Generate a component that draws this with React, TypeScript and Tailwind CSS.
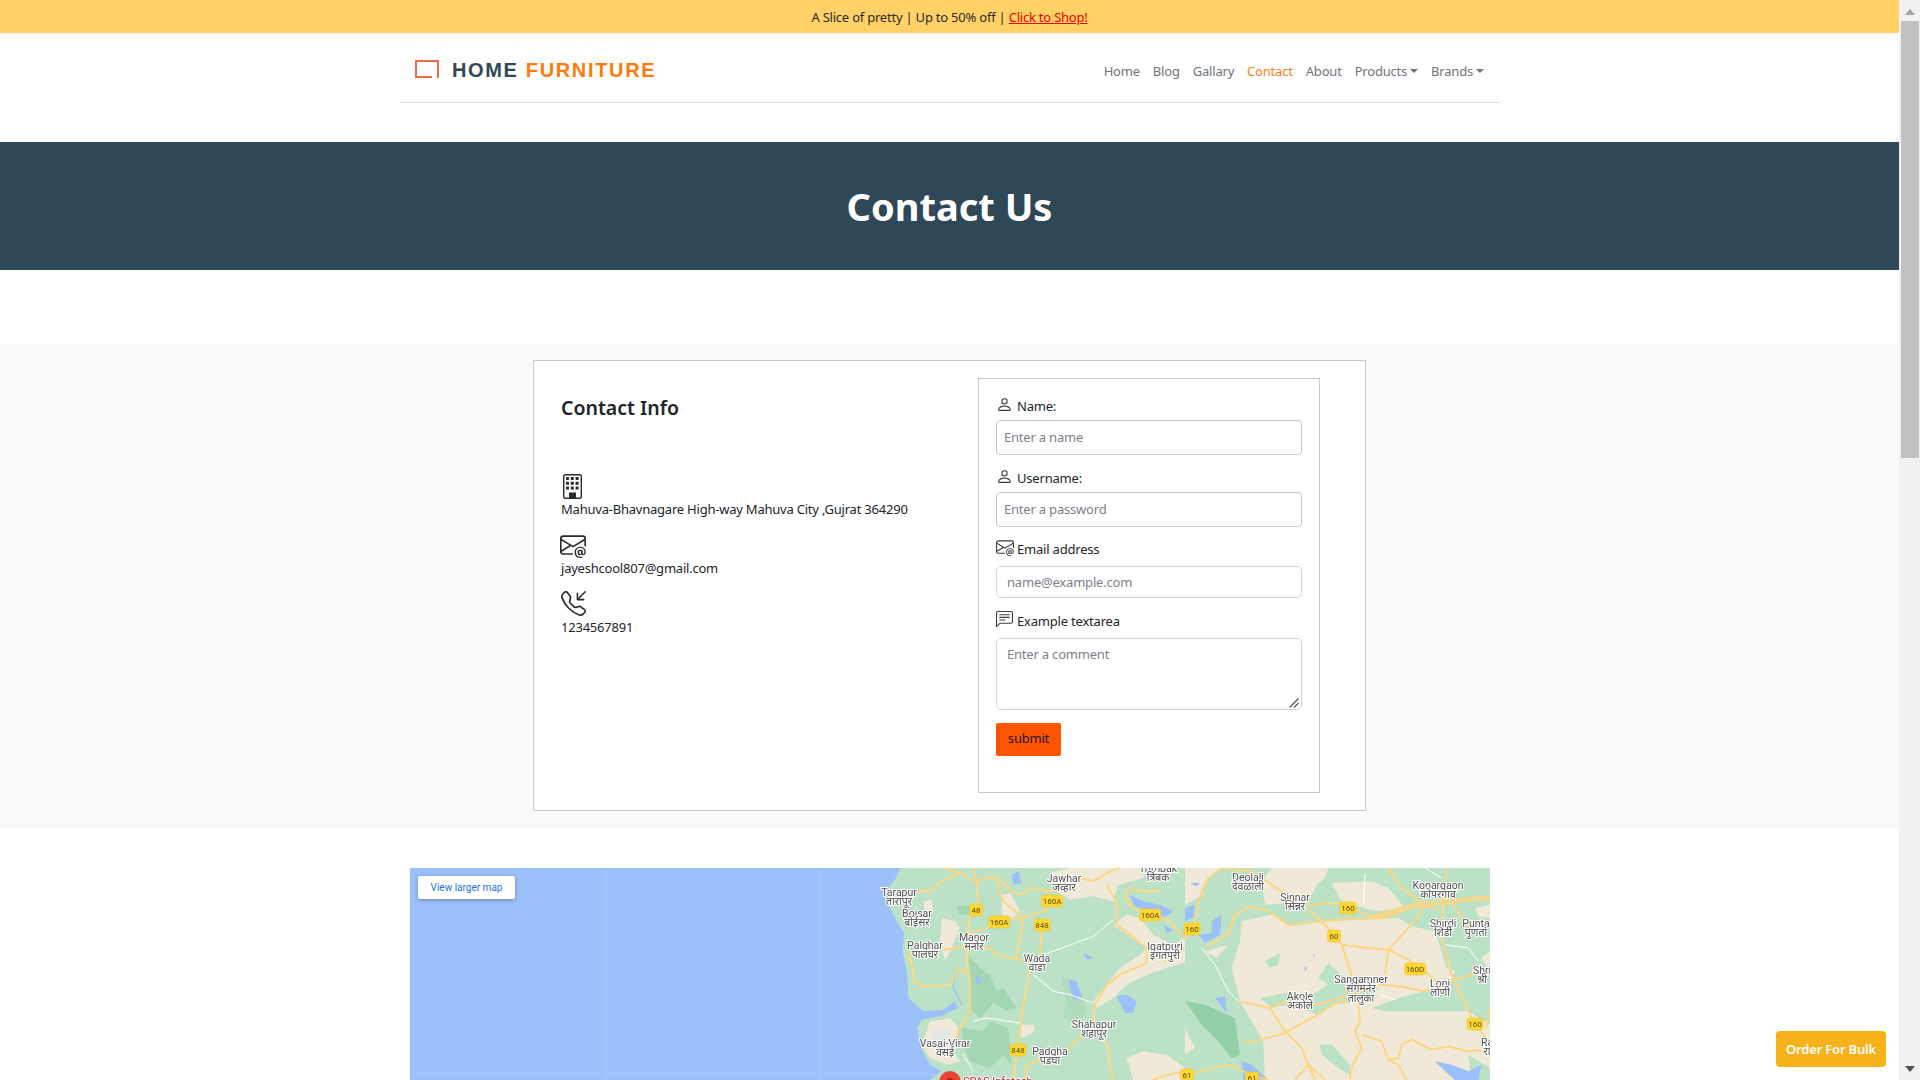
import React from "react";
import { BsPerson, BsEnvelopeAt, BsTelephoneInbound, BsChatLeftText } from "react-icons/bs";

// ─── Map data ─────────────────────────────────────────────────────────────────
const places: [string, string, number, number][] = [
  ["Tarapur", "तारापूर", 489, 24],
  ["Boisar", "बोईसर", 507, 45],
  ["Manor", "मनोर", 564, 69],
  ["Palghar", "पालघर", 515, 77],
  ["Wada", "वाडा", 627, 90],
  ["Jawhar", "जव्हार", 654, 10],
  ["Shahapur", "शहापूर", 684, 156],
  ["Vasai-Virar", "वसई", 535, 175],
  ["Padgha", "पडघा", 640, 183],
  ["Igatpuri", "इगतपुरी", 755, 78],
  ["Trimbak", "त्रिंबक", 748, 0],
  ["Deolali", "देवळाली", 838, 9],
  ["Sinnar", "सिन्नर", 885, 29],
  ["Kopargaon", "कोपरगाव", 1028, 17],
  ["Shirdi", "शिर्डी", 1033, 55],
  ["Punta", "पुणतां", 1066, 55],
  ["Shri", "श्री", 1072, 102],
  ["Ra", "रा", 1077, 174],
  ["Sangamner", "संगमनेर", 951, 111],
  ["Loni", "लोणी", 1030, 115],
  ["Akole", "अकोले", 890, 128],
];

const shields: [string, number, number][] = [
  ["48", 566, 42],
  ["160A", 589, 54],
  ["848", 632, 57],
  ["160A", 642, 33],
  ["160A", 740, 47],
  ["848", 608, 182],
  ["160", 938, 40],
  ["160", 782, 61],
  ["60", 924, 68],
  ["160D", 1005, 101],
  ["160", 1065, 156],
  ["61", 777, 207],
  ["61", 842, 210],
];

// paths below are in 3x crop units, grouped by tile
const westRoads = [
  "M280 0 L290 40 L295 110 L270 140 L262 200 L262 290 L270 340 L270 430 L240 480 L225 520",
  "M190 0 L240 15 L285 40 L350 25 L395 70 L420 80 L460 60 L510 70 L600 30 L640 40 L690 10 L720 0",
  "M100 70 L150 70 L185 40 L240 15",
  "M350 40 L370 100 L430 150 L410 270",
  "M430 150 L500 125 L510 95",
  "M262 200 L330 175 L390 155 L430 150",
  "M485 185 L480 260",
  "M190 245 L260 235 L330 240 L350 260 L440 280 L450 300 L425 440 L420 500 L410 560 L400 636",
  "M85 250 L95 290 L105 345 L130 355 L210 350 L235 300 L262 320",
  "M680 50 L710 100 L710 170 L750 200 L800 240 L800 285 L720 320 L680 350 L640 420 L645 480 L685 540 L690 600 L700 636",
  "M645 480 L600 510 L560 545 L490 570 L440 590 L435 636",
  "M800 250 L850 240 L910 245 L850 280",
  "M735 90 L745 60 L790 70 L840 70",
  "M735 90 L760 120 L820 135 L870 160 L910 205",
  "M820 636 L860 620 L930 610",
];

const eastRoads = [
  "M0 215 L30 160 L40 100 L70 30 L110 0",
  "M110 0 L200 10 L290 70 L360 110 L460 105 L560 145 L700 105 L915 85",
  "M560 150 L700 115 L915 92",
  "M370 125 L430 180 L470 230 L500 320 L480 375",
  "M60 235 L130 200 L150 140 L190 115 L250 130 L310 170 L440 155 L600 150 L700 110",
  "M470 230 L550 240 L610 245 L670 275 L720 310 L760 345 L720 370 L640 355 L590 350 L530 370 L400 410 L340 400 L290 405 L255 420 L160 400",
  "M610 245 L600 320",
  "M610 245 L670 180 L720 115",
  "M255 420 L300 490 L350 540 L370 590 L390 636",
  "M175 525 L230 515 L300 495 L390 445 L450 405 L520 400 L525 460 L510 490 L530 540 L500 600 L495 636",
  "M530 500 L590 520 L610 575 L640 590 L665 636",
  "M610 575 L640 570 L650 530 L680 515 L740 545 L790 535 L850 550 L915 545",
  "M785 0 L775 100 L770 210 L800 320 L860 450 L915 530",
  "M610 0 L650 60 L720 110 L760 125",
  "M800 105 L860 190",
  "M800 340 L860 320 L915 310",
  "M915 420 L905 480",
  "M0 620 L50 610 L130 590 L160 600 L190 620 L250 636",
  "M330 636 L370 590 L420 636",
];

// ─── Map picture ──────────────────────────────────────────────────────────────
const MapPicture = () => (
  <svg viewBox="0 0 1080 212" className="block w-full h-full blur-[0.35px]">
    <rect width="1080" height="212" fill="#9cc0f9" />
    <path d="M196 0V212M410 0V212M0 206H540" stroke="#a6c7fa" strokeWidth="1" />

    <g transform="translate(470 0) scale(0.3333)">
      <path
        d="M60 0 L48 30 L25 60 L20 100 L45 150 L72 195 L68 250 L82 320 L85 390 L130 430 L190 425 L225 400 L235 420 L180 445 L125 455 L112 480 L125 545 L150 590 L185 610 L150 636 H930 V0 Z"
        fill="#bbe2c6"
      />
      <g fill="#f1e9d8">
        <path d="M570 0 L510 15 L530 70 L570 95 L640 85 L700 100 L715 50 L790 30 L800 0 Z" />
        <path d="M740 140 L700 170 L770 220 L800 240 L780 260 L720 300 L680 350 L640 400 L650 420 L700 390 L740 350 L800 320 L860 300 L930 280 V200 L880 230 L820 200 L780 150 Z" />
        <path d="M740 570 L790 550 L860 560 L930 610 V636 H760 Z" />
        <path d="M365 80 L390 75 L420 130 L400 150 L365 140 Z" />
        <path d="M130 100 L155 95 L160 130 L135 140 Z" />
        <path d="M185 150 L225 160 L240 180 L215 240 L195 280 L180 220 Z" />
        <path d="M420 470 L460 470 L465 490 L425 510 Z" />
        <path d="M150 460 L210 450 L235 480 L220 550 L240 580 L200 590 L150 570 L125 530 Z" />
      </g>
      <path d="M150 490 L205 480 L215 530 L170 540 Z" fill="#e4e6e8" />
      <g fill="#a3d7b4">
        <path d="M265 260 L300 300 L330 320 L350 370 L370 360 L410 420 L380 430 L340 405 L300 450 L270 420 L270 330 Z" />
        <path d="M245 480 L310 490 L330 460 L385 480 L395 590 L370 560 L330 600 L270 580 L250 530 Z" />
        <path d="M230 115 L270 110 L270 140 L235 140 Z" />
      </g>
      <path d="M545 330 L590 340 L610 390 L620 430 L590 470 L550 450 L560 400 Z" fill="#aedcbc" />
      <g fill="#9cc0f9">
        <path d="M395 20 L415 10 L425 45 L400 50 Z" />
        <path d="M750 80 L790 100 L840 110 L880 130 L850 150 L840 130 L780 125 L760 110 Z" />
        <path d="M850 170 L880 185 L860 195 Z" />
        <path d="M565 335 L590 340 L605 390 L580 395 Z" />
        <path d="M710 385 L740 380 L770 400 L760 435 L735 435 Z" />
        <path d="M610 255 L640 270 L620 275 Z" />
        <path d="M285 320 L300 330 L305 350 L290 345 Z" />
      </g>
      <path d="M225 310 L220 360 L245 410" fill="none" stroke="#9cc0f9" strokeWidth="4" />
      <path d="M490 260 L560 235 L640 205 L700 155 M460 320 L520 370 L570 380 L640 405 M280 460 L320 450 L420 465 M250 560 L280 610" fill="none" stroke="#ffffff" strokeWidth="3" />
      {westRoads.map((d) => (
        <path key={d} d={d} fill="none" stroke="#fdd682" strokeWidth="6" strokeLinejoin="round" />
      ))}
    </g>

    <g transform="translate(775 0) scale(0.3333)">
      <path d="M0 0 H915 V636 H0 Z" fill="#bbe2c6" />
      <g fill="#f1e9d8">
        <path d="M170 160 L260 140 L320 175 L430 160 L640 150 L680 175 L750 190 L785 300 L810 310 L790 350 L640 390 L560 420 L600 430 L850 430 L915 470 V600 L850 560 L860 636 H240 L235 520 L165 400 L140 300 L165 220 Z" />
        <path d="M230 40 L260 0 H430 L420 30 L395 50 L370 100 L240 110 Z" />
        <path d="M440 45 L560 40 L610 60 L660 120 L570 130 L470 100 Z" />
        <path d="M0 0 H110 L60 40 L40 90 L0 110 Z" />
        <path d="M870 120 L915 110 V150 L880 145 Z" />
        <path d="M890 270 L915 250 V310 Z" />
        <path d="M60 250 L130 230 L95 270 Z" />
        <path d="M0 480 L30 540 L0 560 Z" />
      </g>
      <g fill="#bbe2c6">
        <path d="M240 280 L285 255 L280 290 L255 300 Z" />
        <path d="M225 390 L300 375 L380 380 L430 350 L400 330 L430 285 L480 330 L510 350 L580 360 L540 400 L450 410 L400 440 L310 410 L260 420 Z" />
        <path d="M405 530 L440 530 L495 590 L495 620 L460 600 L410 560 Z" />
      </g>
      <path d="M0 400 L60 410 L150 450 L165 560 L140 570 L100 520 L50 470 Z" fill="#93d0a8" />
      <g fill="#9cc0f9">
        <path d="M0 120 L30 110 L25 150 L0 160 Z" />
        <path d="M80 160 L110 140 L105 200 L60 225 L40 200 L80 195 Z" />
        <path d="M90 390 L120 385 L125 435 Z" />
        <path d="M170 580 L200 590 L250 636 H175 Z" />
        <path d="M750 580 L800 590 L850 610 L890 590 L880 636 H810 L770 600 Z" />
        <path d="M360 295 L368 300 L358 312 Z" />
        <path d="M385 258 L392 262 L387 268 Z" />
        <path d="M15 45 L45 45 L35 55 Z" />
      </g>
      <path d="M50 240 L90 290 L130 370 L160 400 M540 20 L535 110 M780 230 L850 240 L880 280 M580 380 L630 395 M720 0 L770 30 M680 50 L720 60" fill="none" stroke="#ffffff" strokeWidth="3" />
      {eastRoads.map((d) => (
        <path key={d} d={d} fill="none" stroke="#fdd682" strokeWidth="6" strokeLinejoin="round" />
      ))}
    </g>

    <g fontFamily="Roboto, 'Noto Sans', sans-serif" fontSize="10.5" fill="#505050" textAnchor="middle" stroke="#ffffff" strokeWidth="2" paintOrder="stroke">
      {places.map(([en, hi, x, y]) => (
        <g key={en}>
          <text x={x} y={y + 3.5}>{en}</text>
          <text x={x} y={y + 13}>{hi}</text>
        </g>
      ))}
      <text x="951" y="134">तालुका</text>
    </g>

    {shields.map(([label, x, y]) => {
      const w = label.length > 3 ? 21 : label.length > 2 ? 16 : 13;
      return (
        <g key={label + x}>
          <rect x={x - w / 2} y={y - 6} width={w} height="12" rx="2.5" fill="#fdd835" stroke="#f6c52c" strokeWidth="0.6" />
          <text x={x} y={y + 3} fontFamily="Roboto, sans-serif" fontSize="8" fill="#5b4a10" textAnchor="middle">{label}</text>
        </g>
      );
    })}

    <circle cx="540" cy="213.5" r="10.5" fill="#ea4335" />
    <circle cx="540" cy="213.5" r="3.5" fill="#a5261b" />
    <text x="553" y="217" fontFamily="Roboto, sans-serif" fontSize="11" fill="#c5221f" stroke="#ffffff" strokeWidth="2" paintOrder="stroke">SPAS Infotech</text>
  </svg>
);

// ─── Building glyph, drawn since the icon set's version has a different door ──
const BuildingIcon = () => (
  <svg width="19" height="25" viewBox="0 0 19 25" className="mt-[52px] ml-[2px]">
    <rect x="0.7" y="0.7" width="17.6" height="23.6" rx="1.5" fill="none" stroke="#2b2b2b" strokeWidth="1.4" />
    <g fill="#2b2b2b">
      {[3, 7.8, 12.6].map((y) =>
        [3, 7.8, 12.6].map((x) => <rect key={`${x}-${y}`} x={x} y={y} width="3" height="3" rx="0.4" />)
      )}
      <rect x="6" y="18.5" width="7" height="6" />
    </g>
  </svg>
);

// ─── Form ─────────────────────────────────────────────────────────────────────
const FieldLabel = ({ icon, text, className }: { icon: React.ReactNode; text: string; className: string }) => (
  <label className={`flex items-center text-[13px] leading-[18px] tracking-[-0.2px] text-[#212529] ${className}`}>
    <span className="w-[21px] flex shrink-0 -mt-[4px]">{icon}</span>
    {text}
  </label>
);

const ContactForm = () => (
  <div className="ml-[444px] w-[342px] h-[415px] border border-[#c8c8c8] bg-white px-[17px]">
    <FieldLabel icon={<BsPerson className="w-[17px] h-[17px] text-[#3c3c3c]" />} text="Name:" className="mt-[18px] mb-[5px]" />
    <input placeholder="Enter a name" className="block w-[306px] h-[35px] pb-[2px] rounded-[4px] border border-[#c4c8cc] px-[7px] text-[13px] tracking-[-0.2px] placeholder:text-[#7b8289] outline-none" />
    <FieldLabel icon={<BsPerson className="w-[17px] h-[17px] text-[#3c3c3c]" />} text="Username:" className="mt-[14px] mb-[5px]" />
    <input placeholder="Enter a password" className="block w-[306px] h-[35px] pb-[2px] rounded-[4px] border border-[#c4c8cc] px-[7px] text-[13px] tracking-[-0.2px] placeholder:text-[#7b8289] outline-none" />
    <FieldLabel icon={<BsEnvelopeAt className="w-[18px] h-[18px] text-[#3c3c3c]" />} text="Email address" className="mt-[13px] mb-[8px]" />
    <input placeholder="name@example.com" className="block w-[306px] h-[32px] rounded-[5px] border border-[#ced4da] px-[10px] text-[13px] tracking-[-0.2px] placeholder:text-[#7b8289] outline-none" />
    <FieldLabel icon={<BsChatLeftText className="w-[17px] h-[17px] text-[#3c3c3c]" />} text="Example textarea" className="mt-[14px] mb-[8px]" />
    <div className="relative w-[306px] h-[72px]">
      <textarea placeholder="Enter a comment" className="block w-full h-full resize-none rounded-[5px] border border-[#ced4da] px-[10px] py-[6px] text-[13px] tracking-[-0.2px] placeholder:text-[#7b8289] outline-none" />
      <svg width="10" height="10" viewBox="0 0 10 10" className="absolute right-[3px] bottom-[2px]">
        <path d="M0.5 9.5L9.5 0.5M5 9.5L9.5 5" stroke="#505050" strokeWidth="1.2" fill="none" />
      </svg>
    </div>
    <button className="block mt-[13px] w-[65px] h-[33px] pb-[2px] rounded-[2px] bg-[#ff5500] text-[13px] tracking-[-0.2px] text-[#1a1a1a]">submit</button>
  </div>
);

// ─── Page ─────────────────────────────────────────────────────────────────────
const navLinks = [
  ["Home", "text-[#6f7478]"],
  ["Blog", "text-[#6f7478]"],
  ["Gallary", "text-[#6f7478]"],
  ["Contact", "text-[#fd7e14]"],
  ["About", "text-[#6f7478]"],
];

const Caret = () => (
  <span className="inline-block ml-[3px] mb-[3px] border-x-[4px] border-x-transparent border-t-[4px] border-t-[#6f7478]" />
);

export default function App() {
  return (
    <div className="flex h-screen overflow-hidden bg-white font-['Noto_Sans','Open_Sans',sans-serif]">
      <main className="flex-1 min-w-0">
        <div className="h-[33px] pt-[3px] bg-[#ffd166] flex items-center justify-center text-[13px] tracking-[-0.22px] text-[#2b2b2b]">
          A Slice of pretty | Up to 50% off |&nbsp;
          <a className="text-[#f00000] underline">Click to Shop!</a>
        </div>

        <nav className="w-[1101px] ml-[399px] h-[70px] border-b border-[#dee2e6] flex items-center">
          <svg width="24" height="18" viewBox="0 0 24 18" className="ml-[16px] mt-[3px]">
            <path d="M23 18V1H1V17H17" fill="none" stroke="#ee6c4d" strokeWidth="2" />
          </svg>
          <span className="ml-[13px] mt-[5px] font-['Liberation_Sans',sans-serif] font-bold text-[20px] tracking-[1.65px] text-[#2f4858]">
            HOME <span className="text-[#fd7a0c]">FURNITURE</span>
          </span>
          <div className="ml-auto mr-[16px] mt-[8px] flex items-center gap-[13px] text-[13px] tracking-[-0.2px]">
            {navLinks.map(([label, color]) => (
              <a key={label} className={color}>{label}</a>
            ))}
            <a className="text-[#6f7478]">Products<Caret /></a>
            <a className="text-[#6f7478]">Brands<Caret /></a>
          </div>
        </nav>

        <div className="mt-[39px] h-[128px] bg-[#2f4858] flex items-center justify-center">
          <h1 className="font-bold text-[38px] text-white">Contact Us</h1>
        </div>

        <section className="mt-[74px] h-[484px] bg-[#f8f9fa] pt-[16px]">
          <div className="relative w-[833px] ml-[533px] h-[451px] border border-[#c8c8c8] bg-white pt-[17px]">
            <div className="absolute left-[27px] top-[33px] w-[380px] text-[#212529]">
              <h2 className="font-semibold text-[19.5px] leading-[28px]">Contact Info</h2>
              <BuildingIcon />
              <p className="text-[13px] leading-[20px] tracking-[-0.22px] mt-[0px]">Mahuva-Bhavnagare High-way Mahuva City ,Gujrat 364290</p>
              <BsEnvelopeAt className="mt-[13px] -ml-[1px] w-[26px] h-[26px] text-[#2b2b2b]" />
              <p className="text-[13px] leading-[20px] tracking-[-0.22px] mt-[0px]">jayeshcool807@gmail.com</p>
              <BsTelephoneInbound className="mt-[13px] w-[25px] h-[25px] text-[#2b2b2b]" />
              <p className="text-[13px] leading-[20px] tracking-[-0.22px] mt-[1px]">1234567891</p>
            </div>
            <ContactForm />
          </div>
        </section>

        <div className="relative mt-[40px] w-[1080px] ml-[410px] h-[212px] overflow-hidden">
          <MapPicture />
          <a className="absolute left-[8px] top-[8px] w-[97px] h-[23px] bg-white rounded-[2px] shadow-[0_1px_4px_rgba(0,0,0,0.3)] flex items-center justify-center font-['Roboto',sans-serif] text-[10px] text-[#1a73e8]">
            View larger map
          </a>
        </div>
      </main>

      {/* scrollbar */}
      <aside className="w-[21px] bg-[#f1f1f1] flex flex-col items-center shrink-0">
        <span className="mt-[9px] border-x-[5px] border-x-transparent border-b-[6px] border-b-[#a3a3a3]" />
        <span className="mt-[6px] w-[18px] h-[437px] bg-[#c1c1c1]" />
        <span className="mt-auto mb-[8px] border-x-[5px] border-x-transparent border-t-[6px] border-t-[#505050]" />
      </aside>

      <button className="fixed left-[1776px] top-[1031px] w-[110px] h-[36px] pt-[2px] rounded-[4px] bg-[#f7b21b] text-white font-semibold text-[13px] tracking-[-0.2px]">
        Order For Bulk
      </button>
    </div>
  );
}
